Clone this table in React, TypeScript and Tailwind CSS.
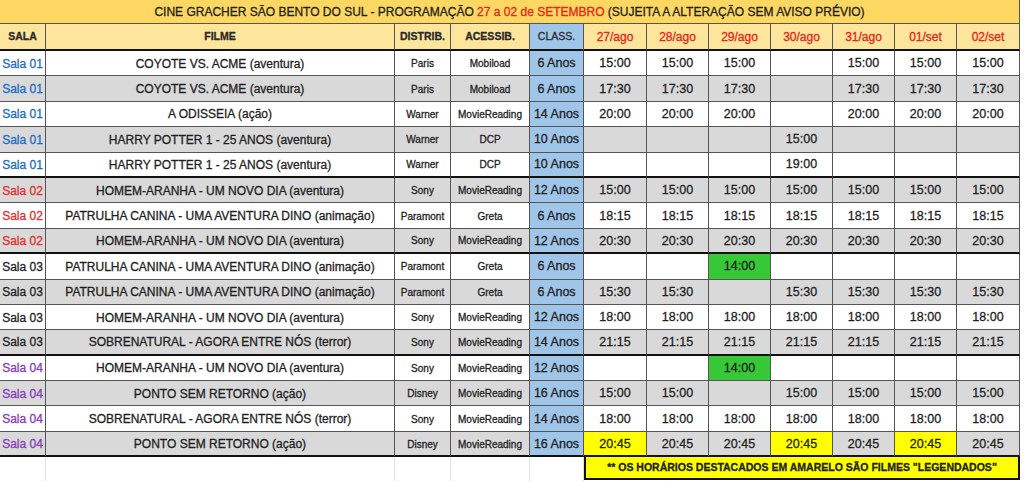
import React from 'react';

type Cell = string | { t: string; c: 'g' | 'y' };

type Row = {
  sala: string;
  filme: string;
  dist: string;
  acess: string;
  cls: string;
  times: Cell[];
  end?: boolean;
};

const GRID =
  'grid grid-cols-[46px_349px_56px_79px_54px_63px_62px_62px_62px_62px_62px_63px]';

const salaColor: Record<string, string> = {
  'Sala 01': 'text-[#1b6ec8]',
  'Sala 02': 'text-[#e4302c]',
  'Sala 03': 'text-[#1f1f1f]',
  'Sala 04': 'text-[#8a3bbd]',
};

const HA = 'HOMEM-ARANHA - UM NOVO DIA (aventura)';
const PC = 'PATRULHA CANINA - UMA AVENTURA DINO (animação)';
const SB = 'SOBRENATURAL - AGORA ENTRE NÓS (terror)';
const PS = 'PONTO SEM RETORNO (ação)';
const HP = 'HARRY POTTER 1 - 25 ANOS (aventura)';
const CY = 'COYOTE VS. ACME (aventura)';

const all = (t: string): Cell[] => [t, t, t, t, t, t, t];

const rows: Row[] = [
  { sala: 'Sala 01', filme: CY, dist: 'Paris', acess: 'Mobiload', cls: '6 Anos', times: ['15:00', '15:00', '15:00', '', '15:00', '15:00', '15:00'] },
  { sala: 'Sala 01', filme: CY, dist: 'Paris', acess: 'Mobiload', cls: '6 Anos', times: ['17:30', '17:30', '17:30', '', '17:30', '17:30', '17:30'] },
  { sala: 'Sala 01', filme: 'A ODISSEIA (ação)', dist: 'Warner', acess: 'MovieReading', cls: '14 Anos', times: ['20:00', '20:00', '20:00', '', '20:00', '20:00', '20:00'] },
  { sala: 'Sala 01', filme: HP, dist: 'Warner', acess: 'DCP', cls: '10 Anos', times: ['', '', '', '15:00', '', '', ''] },
  { sala: 'Sala 01', filme: HP, dist: 'Warner', acess: 'DCP', cls: '10 Anos', times: ['', '', '', '19:00', '', '', ''], end: true },
  { sala: 'Sala 02', filme: HA, dist: 'Sony', acess: 'MovieReading', cls: '12 Anos', times: all('15:00') },
  { sala: 'Sala 02', filme: PC, dist: 'Paramont', acess: 'Greta', cls: '6 Anos', times: all('18:15') },
  { sala: 'Sala 02', filme: HA, dist: 'Sony', acess: 'MovieReading', cls: '12 Anos', times: all('20:30'), end: true },
  { sala: 'Sala 03', filme: PC, dist: 'Paramont', acess: 'Greta', cls: '6 Anos', times: ['', '', { t: '14:00', c: 'g' }, '', '', '', ''] },
  { sala: 'Sala 03', filme: PC, dist: 'Paramont', acess: 'Greta', cls: '6 Anos', times: ['15:30', '15:30', '', '15:30', '15:30', '15:30', '15:30'] },
  { sala: 'Sala 03', filme: HA, dist: 'Sony', acess: 'MovieReading', cls: '12 Anos', times: all('18:00') },
  { sala: 'Sala 03', filme: SB, dist: 'Sony', acess: 'MovieReading', cls: '14 Anos', times: all('21:15'), end: true },
  { sala: 'Sala 04', filme: HA, dist: 'Sony', acess: 'MovieReading', cls: '12 Anos', times: ['', '', { t: '14:00', c: 'g' }, '', '', '', ''] },
  { sala: 'Sala 04', filme: PS, dist: 'Disney', acess: 'MovieReading', cls: '16 Anos', times: ['15:00', '15:00', '', '15:00', '15:00', '15:00', '15:00'] },
  { sala: 'Sala 04', filme: SB, dist: 'Sony', acess: 'MovieReading', cls: '14 Anos', times: all('18:00') },
  {
    sala: 'Sala 04', filme: PS, dist: 'Disney', acess: 'MovieReading', cls: '16 Anos',
    times: [{ t: '20:45', c: 'y' }, '20:45', '20:45', { t: '20:45', c: 'y' }, '20:45', { t: '20:45', c: 'y' }, '20:45'],
    end: true,
  },
];

const dates = ['27/ago', '28/ago', '29/ago', '30/ago', '31/ago', '01/set', '02/set'];

function DataRow({ row, idx }: { row: Row; idx: number }) {
  const bg = idx % 2 === 0 ? 'bg-white' : 'bg-[#d9d9d9]';
  const bb = row.end ? 'border-b-2 border-b-[#111]' : 'border-b border-b-[#555]';
  const cell = `flex items-center justify-center pt-px border-r border-r-[#555] ${bb}`;
  return (
    <div className={`${GRID} h-[25.4px] text-[#1f1f1f]`}>
      <div className={`${cell} ${bg} text-[12px] ${salaColor[row.sala]}`}>{row.sala}</div>
      <div className={`${cell} ${bg} text-[12px]`}>{row.filme}</div>
      <div className={`${cell} ${bg} text-[10px]`}>{row.dist}</div>
      <div className={`${cell} ${bg} text-[10px]`}>{row.acess}</div>
      <div className={`${cell} bg-[#9fc5e8] text-[12.5px]`}>{row.cls}</div>
      {row.times.map((t, i) => {
        const txt = typeof t === 'string' ? t : t.t;
        const hl = typeof t === 'string' ? bg : t.c === 'g' ? 'bg-[#37c837]' : 'bg-[#ffff00]';
        return (
          <div key={i} className={`${cell} ${hl} text-[12.5px]`}>
            {txt}
          </div>
        );
      })}
    </div>
  );
}

export default function App() {
  const head = 'flex items-center justify-center pt-px border-r border-r-[#555] border-b-2 border-b-[#111] bg-[#fde59c]';
  return (
    <div className="w-[1024px] h-[481px] overflow-hidden bg-white font-['Liberation_Sans',Arial,sans-serif] [-webkit-text-stroke:0.3px_currentColor]">
      <div className="w-[1020px] border-r border-r-[#555]">
        <div className="h-[24px] bg-[#fcd862] border-b border-b-[#555] flex items-center justify-center pt-px text-[12px] text-[#1f1f1f]">
          <span>
            CINE GRACHER SÃO BENTO DO SUL - PROGRAMAÇÃO <span className="text-[#e4261e]">27 a 02 de SETEMBRO</span> (SUJEITA A ALTERAÇÃO SEM AVISO PRÉVIO)
          </span>
        </div>
        <div className={`${GRID} h-[27px] text-[10.5px] font-bold text-[#2a2a2a]`}>
          <div className={head}>SALA</div>
          <div className={head}>FILME</div>
          <div className={head}>DISTRIB.</div>
          <div className={head}>ACESSIB.</div>
          <div className={`${head} !bg-[#9fc5e8] font-normal`}>CLASS.</div>
          {dates.map((d) => (
            <div key={d} className={`${head} text-[12px] font-normal text-[#e4261e]`}>
              {d}
            </div>
          ))}
        </div>
        {rows.map((r, i) => (
          <DataRow key={i} row={r} idx={i} />
        ))}
      </div>
      <div className={`${GRID} h-[25px]`}>
        <div className="border-r border-r-[#e2e2e2]" />
        <div className="border-r border-r-[#e2e2e2]" />
        <div className="border-r border-r-[#e2e2e2]" />
        <div className="border-r border-r-[#e2e2e2]" />
        <div className="border-r border-r-[#e2e2e2]" />
        <div className="col-span-7 h-[23px] bg-[#ffff00] border-2 border-[#111] border-t-0 flex items-center justify-center text-[10.5px] font-bold text-[#1f1f1f]">
          ** OS HORÁRIOS DESTACADOS EM AMARELO SÃO FILMES "LEGENDADOS"
        </div>
      </div>
    </div>
  );
}
